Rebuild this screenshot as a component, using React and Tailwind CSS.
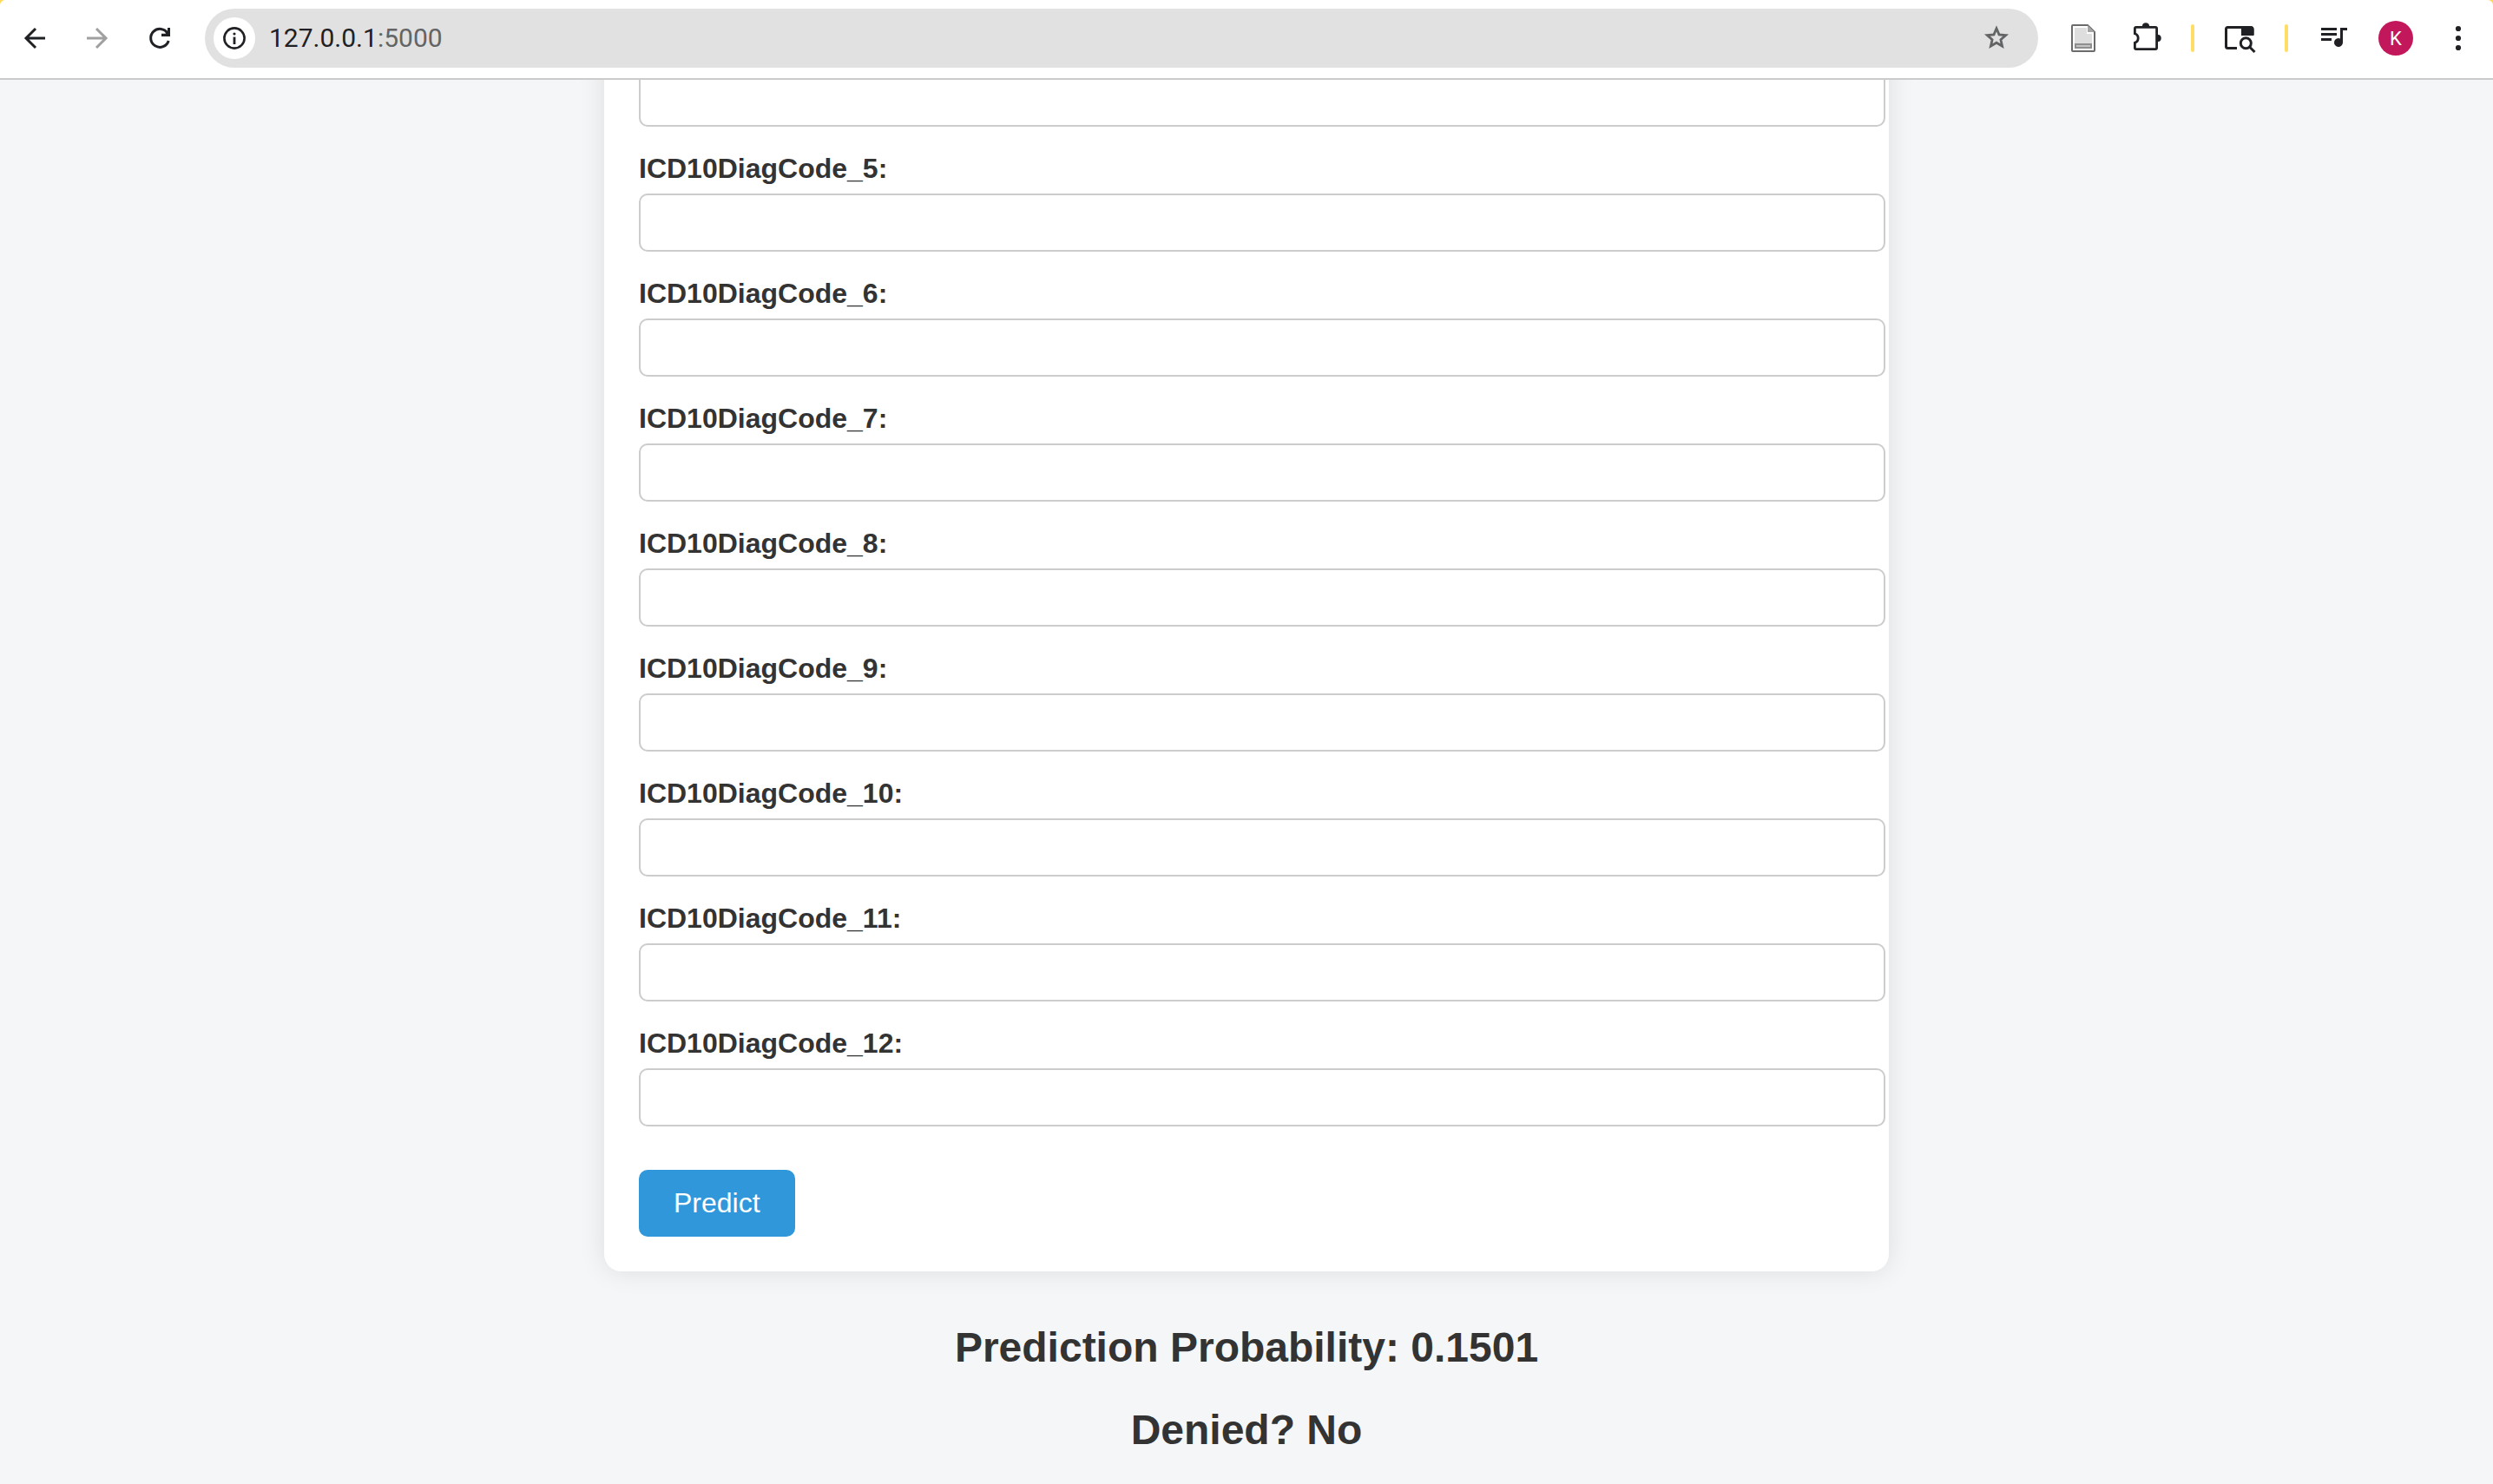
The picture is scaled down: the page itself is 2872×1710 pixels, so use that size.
const FIELDS = [4, 5, 6, 7, 8, 9, 10, 11, 12];

function Icon({ children, className = "size-12" }) {
  return (
    <svg viewBox="0 0 48 48" fill="none" stroke="currentColor" strokeWidth="3" className={className} aria-hidden="true">
      {children}
    </svg>
  );
}

function ToolButton({ label, className = "", children, disabled }) {
  return (
    <button type="button" aria-label={label} disabled={disabled} className={`size-12 shrink-0 ${className}`}>
      {children}
    </button>
  );
}

function Divider({ className }) {
  return <span className={`h-8 w-1 shrink-0 rounded-full bg-[#ffde67] ${className}`} />;
}

function Toolbar() {
  return (
    <header className="relative z-10 bg-[#ffd85c]">
      <div className="flex h-[90px] items-center rounded-t-[6px] bg-white pb-0.5 text-[#1f2124]">
        <nav className="flex items-center gap-6 pl-4">
          <ToolButton label="Back">
            <Icon>
              <path d="M36 24H14M25 13 14 24l11 11" />
            </Icon>
          </ToolButton>
          <ToolButton label="Forward" className="text-[#a0a0a1]" disabled>
            <Icon>
              <path d="M12 24h22M23 13l11 11-11 11" />
            </Icon>
          </ToolButton>
          <ToolButton label="Reload">
            <Icon>
              <path d="M33.2 18.5A10.5 10.5 0 1 0 34.2 27" />
              <path d="M26 22v-3.2h4.5l2.5-2.5V12h3v10z" fill="currentColor" stroke="none" />
            </Icon>
          </ToolButton>
        </nav>
        <div className="ml-7 flex h-[68px] flex-1 items-center rounded-full bg-[#e1e1e1] pl-2.5 pr-6">
          <button type="button" aria-label="Site information" className="size-12 shrink-0 rounded-full bg-white">
            <Icon>
              <circle cx="24" cy="24" r="11.6" strokeWidth="2.6" />
              <path d="M24 22.6V31" strokeWidth="2.8" />
              <circle cx="24" cy="19" r="1.6" fill="currentColor" stroke="none" />
            </Icon>
          </button>
          <p className="flex-1 pl-4 font-['Roboto',sans-serif] text-[30px] leading-9">
            127.0.0.1<span className="text-[#636466]">:5000</span>
          </p>
          <ToolButton label="Bookmark this page" className="text-[#636466]">
            <Icon>
              <path
                d="M24 12.8l3 7.1 7.7.7-5.8 5.1 1.7 7.5-6.6-4-6.6 4 1.7-7.5-5.8-5.1 7.7-.7z"
                strokeWidth="2.8"
              />
            </Icon>
          </ToolButton>
        </div>
        <div className="flex items-center pl-7 pr-4">
          <ToolButton label="Document extension">
            <Icon>
              <path d="M12 9h17l8 8v21a1 1 0 0 1-1 1H12a1 1 0 0 1-1-1V10a1 1 0 0 1 1-1z" fill="#fff" stroke="#6b6b6b" strokeWidth="2" />
              <path d="M14 12h14v7h6v17H14z" fill="#dedede" stroke="none" />
              <path d="M29 9v8h8z" fill="#a5a5a5" stroke="none" />
              <path d="M14 30h20v6H14z" fill="#8f8f8f" stroke="none" />
              <path d="M16 32h16v2H16z" fill="#c4c4c4" stroke="none" />
            </Icon>
          </ToolButton>
          <ToolButton label="Extensions" className="ml-[26px]">
            <Icon>
              <path d="M9.400 12.900a1.500 1.500 0 0 1 1.500-1.500h22.200a1.500 1.500 0 0 1 1.500 1.500v22.200a1.500 1.500 0 0 1-1.500 1.500H10.900a1.500 1.500 0 0 1-1.500-1.500v-5.800a5.600 5.600 0 0 0 0-10.600z" strokeWidth="2.800" />
              <path d="M18 10.500a4 4 0 0 1 8 0zM35.500 20a4 4 0 0 1 0 8z" fill="currentColor" stroke="currentColor" strokeWidth="0.500" />
            </Icon>
          </ToolButton>
          <Divider className="ml-[26px]" />
          <ToolButton label="Search tabs" className="ml-7">
            <Icon>
              <path d="M21 35.500H10.500a2 2 0 0 1-2-2v-20a2 2 0 0 1 2-2H37a2 2 0 0 1 2 2V20" />
              <path d="M26 10.500h12a3 3 0 0 1 2.500 3v7.500H26z" fill="currentColor" stroke="none" />
              <circle cx="31.300" cy="29.800" r="6" />
              <path d="M35.500 34l6 6" />
            </Icon>
          </ToolButton>
          <Divider className="ml-7" />
          <ToolButton label="Media controls" className="ml-7">
            <Icon>
              <path d="M10 13.500h18M10 19.500h18M10 25.500h12" />
              <path d="M32 12h8v3h-5v14a5 5 0 1 1-3-4.600z" fill="currentColor" stroke="none" />
            </Icon>
          </ToolButton>
          <button
            type="button"
            aria-label="Profile"
            className="ml-7 flex size-10 shrink-0 items-center justify-center rounded-full bg-[#c2185b] font-['Roboto',sans-serif] text-[22px] text-white"
          >
            K
          </button>
          <ToolButton label="Menu" className="ml-7">
            <Icon>
              <g fill="currentColor" stroke="none">
                <circle cx="24" cy="13" r="3.1" />
                <circle cx="24" cy="24" r="3.1" />
                <circle cx="24" cy="35" r="3.1" />
              </g>
            </Icon>
          </ToolButton>
        </div>
      </div>
      <div className="h-0.5 bg-[#cacbcc]" />
    </header>
  );
}

function CodeField({ number }) {
  const id = `ICD10DiagCode_${number}`;
  return (
    <div className="pt-[30px]">
      <label htmlFor={id} className="mb-2.5 block text-[32px] font-bold leading-[37px]">
        {id}:
      </label>
      <div className="-mr-9">
        <input
          id={id}
          name={id}
          type="text"
          className="block h-[67px] w-full rounded-[10px] border-2 border-[#ccc] bg-white px-4 text-[26px]"
        />
      </div>
    </div>
  );
}

export default function App() {
  return (
    <div className="flex h-screen flex-col overflow-hidden bg-[#f4f6f8] font-['Liberation_Sans',Arial,sans-serif] text-[#333]">
      <Toolbar />
      <main className="flex min-h-0 flex-1 flex-col justify-end pb-[35px]">
        <form className="mx-auto w-full max-w-[1480px] rounded-b-[20px] bg-white px-10 pb-10 shadow-[0_0_30px_rgba(0,0,0,0.1)]">
          {FIELDS.map((number) => (
            <CodeField key={number} number={number} />
          ))}
          <button
            type="button"
            className="mt-[50px] block rounded-[10px] bg-[#3098da] px-10 py-5 text-[32px] leading-[37px] text-white"
          >
            Predict
          </button>
        </form>
        <section className="mt-[60px] flex flex-col gap-10 text-center text-5xl/[55px] font-bold">
          <h2>Prediction Probability: 0.1501</h2>
          <h2>Denied? No</h2>
        </section>
      </main>
    </div>
  );
}
